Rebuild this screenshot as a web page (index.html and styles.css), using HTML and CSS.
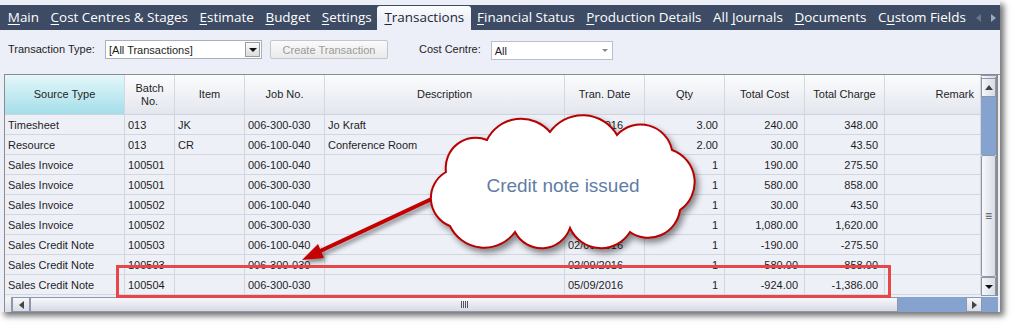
FILE: index.html
```html
<!DOCTYPE html>
<html lang="en">
<head>
    <meta charset="UTF-8">
    <title>Job — Transactions</title>
    <link rel="stylesheet" href="styles.css">
</head>
<body>
    <div class="window">
        <div class="tabs">
            <span class="tab"><u>M</u>ain</span>
            <span class="tab"><u>C</u>ost Centres &amp; Stages</span>
            <span class="tab"><u>E</u>stimate</span>
            <span class="tab"><u>B</u>udget</span>
            <span class="tab"><u>S</u>ettings</span>
            <span class="tab active"><u>T</u>ransactions</span>
            <span class="tab"><u>F</u>inancial Status</span>
            <span class="tab"><u>P</u>roduction Details</span>
            <span class="tab">All <u>J</u>ournals</span>
            <span class="tab"><u>D</u>ocuments</span>
            <span class="tab">C<u>u</u>stom Fields</span>
            <span class="tab-nav"><i class="tri-left dim"></i><i class="tri-right"></i></span>
        </div>

        <div class="toolbar">
            <label class="lbl">Transaction Type:</label>
            <div class="combo combo-type">
                <span>[All Transactions]</span>
                <span class="combo-btn"><i class="tri-down"></i></span>
            </div>
            <button class="btn" disabled>Create Transaction</button>
            <label class="lbl lbl-cc">Cost Centre:</label>
            <div class="combo combo-cc">
                <span>All</span>
                <i class="tri-down small"></i>
            </div>
        </div>

        <div class="grid-box">
            <div class="grid-view">
                <table class="grid">
                    <colgroup>
                        <col style="width:120px"><col style="width:50px"><col style="width:70px">
                        <col style="width:80px"><col style="width:240px"><col style="width:80px">
                        <col style="width:80px"><col style="width:80px"><col style="width:80px">
                        <col style="width:96px">
                    </colgroup>
                    <thead>
                        <tr>
                            <th class="sorted">Source Type</th>
                            <th>Batch<br>No.</th>
                            <th>Item</th>
                            <th>Job No.</th>
                            <th>Description</th>
                            <th>Tran. Date</th>
                            <th>Qty</th>
                            <th>Total Cost</th>
                            <th>Total Charge</th>
                            <th class="num">Remark</th>
                        </tr>
                    </thead>
                    <tbody>
                        <tr><td>Timesheet</td><td>013</td><td>JK</td><td>006-300-030</td><td>Jo Kraft</td><td>01/09/2016</td><td class="num">3.00</td><td class="num">240.00</td><td class="num">348.00</td><td></td></tr>
                        <tr><td>Resource</td><td>013</td><td>CR</td><td>006-100-040</td><td>Conference Room</td><td>01/09/2016</td><td class="num">2.00</td><td class="num">30.00</td><td class="num">43.50</td><td></td></tr>
                        <tr><td>Sales Invoice</td><td>100501</td><td></td><td>006-100-040</td><td></td><td></td><td class="num">1</td><td class="num">190.00</td><td class="num">275.50</td><td></td></tr>
                        <tr><td>Sales Invoice</td><td>100501</td><td></td><td>006-300-030</td><td></td><td></td><td class="num">1</td><td class="num">580.00</td><td class="num">858.00</td><td></td></tr>
                        <tr><td>Sales Invoice</td><td>100502</td><td></td><td>006-100-040</td><td></td><td></td><td class="num">1</td><td class="num">30.00</td><td class="num">43.50</td><td></td></tr>
                        <tr><td>Sales Invoice</td><td>100502</td><td></td><td>006-300-030</td><td></td><td></td><td class="num">1</td><td class="num">1,080.00</td><td class="num">1,620.00</td><td></td></tr>
                        <tr><td>Sales Credit Note</td><td>100503</td><td></td><td>006-100-040</td><td></td><td>02/09/2016</td><td class="num">1</td><td class="num">-190.00</td><td class="num">-275.50</td><td></td></tr>
                        <tr><td>Sales Credit Note</td><td>100503</td><td></td><td>006-300-030</td><td></td><td>02/09/2016</td><td class="num">1</td><td class="num">-580.00</td><td class="num">-858.00</td><td></td></tr>
                        <tr><td>Sales Credit Note</td><td>100504</td><td></td><td>006-300-030</td><td></td><td>05/09/2016</td><td class="num">1</td><td class="num">-924.00</td><td class="num">-1,386.00</td><td></td></tr>
                    </tbody>
                </table>
            </div>

            <div class="vscroll">
                <div class="sb-btn sb-up"><i class="tri-up"></i></div>
                <div class="sb-track sb-track-top"></div>
                <div class="sb-thumb-v"><span class="grip-h">≡</span></div>
                <div class="sb-btn sb-down"><i class="tri-down"></i></div>
            </div>

            <div class="hscroll">
                <div class="sb-grip"></div>
                <div class="sb-btn sb-left"><i class="tri-left"></i></div>
                <div class="sb-thumb-h"><span class="grip-v"></span></div>
                <div class="sb-track sb-track-right"></div>
                <div class="sb-btn sb-right"><i class="tri-right"></i></div>
            </div>
        </div>
    </div>

    <!-- callout drawn over the grid -->
    <svg class="callout" width="1015" height="326" viewBox="0 0 1015 326">
        <rect class="highlight" x="117.5" y="266.5" width="772" height="30"/>
        <g class="arrow">
            <line x1="438" y1="196" x2="316" y2="253"/>
            <polygon points="302,260 318,244 324,258"/>
        </g>
        <path class="cloud" d="M446,172 A30,30 0 0 1 487,140 A38,38 0 0 1 550,132 A40,40 0 0 1 617,135 A32,32 0 0 1 672,150 A34,34 0 0 1 680,210 A32,32 0 0 1 630,232 A34,34 0 0 1 570,228 A30,30 0 0 1 515,232 A38,38 0 0 1 450,226 A30,30 0 0 1 446,172 Z"/>
        <text class="cloud-text" x="563" y="192">Credit note issued</text>
    </svg>
</body>
</html>
```

FILE: styles.css
```css
body { margin: 0; background: #fff; font-family: "Liberation Sans", Arial, sans-serif; font-size: 11px; color: #1e1e1e; position: relative; width: 1015px; height: 326px; overflow: hidden; }

.window { width: 1000px; height: 312px; box-sizing: border-box; padding-top: 5px; background: #eceff7; box-shadow: 4px 4px 6px rgba(0,0,0,.55); }

/* tabs */
.tabs { height: 25px; background: #3d4b64; display: flex; padding-left: 2px; font-family: "Open Sans", sans-serif; font-size: 13.45px; color: #fff; }
.tab { padding: 0 5.8px; line-height: 25px; white-space: nowrap; }
.tab u { text-decoration-thickness: 1px; text-underline-offset: 2px; }
.tab.active { background: linear-gradient(#fbfcfe, #eceff7 60%); color: #1d2738; margin: 1px 0 0 0; padding: 0 7px; line-height: 23px; border-radius: 3px 3px 0 0; }
.tab-nav { margin-left: auto; display: flex; align-items: center; gap: 10px; padding-right: 4px; }
.tab-nav .tri-left.dim { border-right-color: #6b7588; }
.tab-nav .tri-right { border-left-color: #9aa7bd; }

/* toolbar */
.toolbar { height: 44px; box-sizing: border-box; padding: 10px 0 0 8px; display: flex; align-items: flex-start; }
.lbl { line-height: 19px; width: 97px; }
.lbl-cc { width: auto; margin-left: 31px; margin-right: 10px; }
.combo { height: 19px; box-sizing: border-box; background: #fff; border: 1px solid #a9b0bd; display: flex; align-items: center; padding-left: 3px; }
.combo span:first-child { flex: 1; }
.combo-type { width: 157px; }
.combo-btn { width: 15px; height: 15px; margin-right: 1px; background: linear-gradient(#fafafa, #dcdcdc); border: 1px solid #9c9c9c; box-sizing: border-box; display: flex; align-items: center; justify-content: center; }
.combo-cc { width: 122px; margin-top: 1px; border-color: #b8c0cf; }
.combo-cc .tri-down { margin-right: 4px; border-top-color: #8c8c8c; }
.btn { margin-left: 8px; width: 118px; height: 19px; padding: 0; font: inherit; color: #9a9a9a; background: linear-gradient(#fafafa, #eaeaea); border: 1px solid #c3c6cc; border-radius: 2px; }

/* triangles */
.tri-down, .tri-up, .tri-left, .tri-right { display: block; width: 0; height: 0; border: 4px solid transparent; }
.tri-down { border-top: 4px solid #111; border-bottom-width: 0; }
.tri-down.small { border-width: 3px 3px 0; border-top-color: #888; }
.tri-up { border-bottom: 5px solid #444; border-top-width: 0; }
.tri-left { border-right: 5px solid #444; border-left-width: 0; }
.tri-right { border-left: 5px solid #444; border-right-width: 0; }

/* grid */
.grid-box { margin-left: 4px; width: 996px; border-top: 1px solid #8c8c8c; border-left: 1px solid #8c8c8c; box-sizing: border-box; display: grid; grid-template-columns: 976px 17px; grid-template-rows: 221px 15px; row-gap: 1px; background: #eceff7; }
.grid-view { overflow: hidden; background: #eef0f8; }
.grid { border-collapse: separate; border-spacing: 0; table-layout: fixed; width: 976px; }
.grid th { height: 40px; box-sizing: border-box; padding: 0 3px; font-weight: normal; text-align: center; line-height: 13px; color: #1e1e1e; background: linear-gradient(#fbfcfd, #e3e6ee); border-right: 1px solid #d5d8df; border-bottom: 1px solid #d0d3da; }
.grid th.sorted { background: linear-gradient(#e4f7fa, #a4deea); }
.grid td { height: 20px; box-sizing: border-box; padding: 0 3px; white-space: nowrap; overflow: hidden; border-right: 1px solid #d3d6dd; border-bottom: 1px solid #d3d6dd; }
.grid th.num { text-align: right; padding-right: 6px; }
.grid td.num { text-align: right; padding-right: 6px; }

/* scrollbars */
.vscroll { display: flex; flex-direction: column; border-right: 2px solid #8c8c8c; }
.sb-btn { display: flex; align-items: center; justify-content: center; background: linear-gradient(90deg, #f6f7fa, #d8dce6); border: 1px solid #8d97aa; box-sizing: border-box; }
.sb-up { height: 22px; border-top: 4px double #8d97aa; }
.sb-down { height: 19px; }
.sb-track { background: #86a2cf; }
.sb-track-top { height: 58px; }
.sb-thumb-v { height: 122px; box-sizing: border-box; background: linear-gradient(90deg, #f7f8fb, #d9dde6); border: 1px solid #8d97aa; border-radius: 2px; display: flex; align-items: center; justify-content: center; color: #555; font-size: 12px; }
.hscroll { grid-column: 1 / 3; display: flex; background: #86a2cf; }
.sb-grip { width: 6px; background: linear-gradient(#f6f7fa, #d8dce6); border-right: 1px solid #8d97aa; }
.sb-left { width: 18px; background: linear-gradient(#f6f7fa, #d8dce6); }
.sb-right { width: 16px; background: linear-gradient(#f6f7fa, #d8dce6); }
.sb-thumb-h { width: 868px; box-sizing: border-box; background: linear-gradient(#f7f8fb, #d6dae4); border: 1px solid #8d97aa; display: flex; align-items: center; justify-content: center; }
.grip-v { width: 7px; height: 7px; background: repeating-linear-gradient(90deg, #555 0 1px, transparent 1px 2px); }
.sb-track-right { width: 68px; background: #86a2cf; }

/* annotation overlay */
.callout { position: absolute; left: 0; top: 0; pointer-events: none; }
.highlight { fill: none; stroke: #e8474a; stroke-width: 3; }
.arrow { filter: drop-shadow(2px 3px 2px rgba(0,0,0,.45)); }
.arrow line { stroke: #c40000; stroke-width: 4; }
.arrow polygon { fill: #c40000; }
.cloud { fill: #fff; stroke: #b80000; stroke-width: 2; filter: drop-shadow(3px 4px 3px rgba(0,0,0,.45)); }
.cloud-text { font-family: "Liberation Sans", Arial, sans-serif; font-size: 19px; fill: #5f7da6; text-anchor: middle; }
```
